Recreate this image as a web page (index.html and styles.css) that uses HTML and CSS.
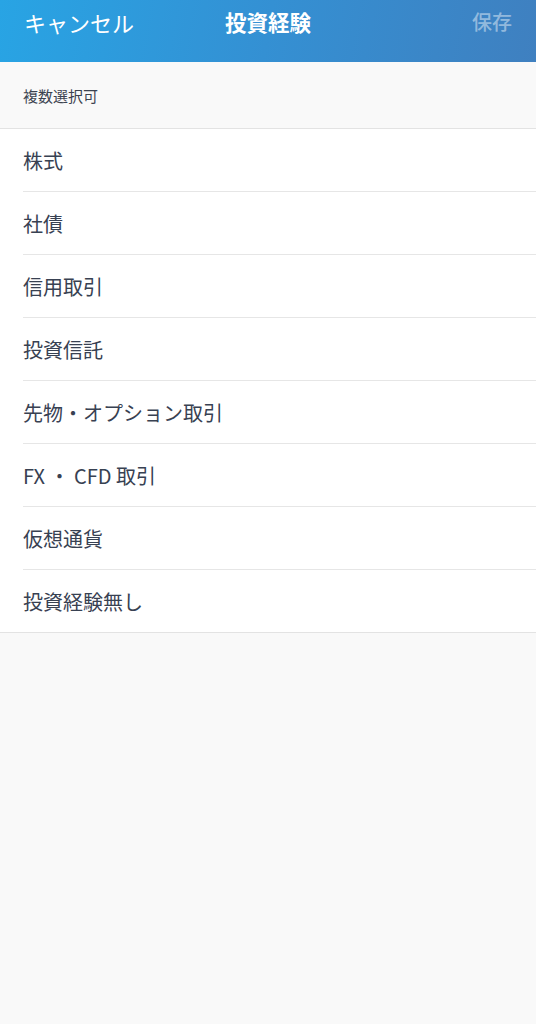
FILE: index.html
```html
<!DOCTYPE html>
<html lang="ja">
<head>
<meta charset="utf-8">
<title>投資経験</title>
<link rel="stylesheet" href="styles.css">
</head>
<body>
<header class="navbar">
  <span class="nav-left">キャンセル</span>
  <span class="nav-title">投資経験</span>
  <span class="nav-right">保存</span>
</header>
<div class="section-header">複数選択可</div>
<ul class="list">
  <li class="item">株式</li>
  <li class="item">社債</li>
  <li class="item">信用取引</li>
  <li class="item">投資信託</li>
  <li class="item">先物・オプション取引</li>
  <li class="item">FX ・ CFD 取引</li>
  <li class="item">仮想通貨</li>
  <li class="item last">投資経験無し</li>
</ul>
</body>
</html>
```
FILE: styles.css
```css
* { box-sizing: border-box; }
html, body {
  margin: 0;
  padding: 0;
  background: #f9f9f9;
  font-family: "Noto Sans CJK JP", "Noto Sans", sans-serif;
}
.navbar {
  height: 62px;
  background: linear-gradient(100deg, #28a4e4 0%, #3490d3 50%, #3f80c0 100%);
  display: grid;
  grid-template-columns: 1fr auto 1fr;
  align-items: start;
  padding: 5px 24px 0 24px;
  color: #fff;
}
.nav-left {
  font-size: 22px;
  line-height: 34px;
  justify-self: start;
}
.nav-title {
  font-size: 21.5px;
  font-weight: 700;
  line-height: 34px;
}
.nav-right {
  justify-self: end;
  font-size: 20px;
  line-height: 34px;
  font-weight: 500;
  color: rgba(255,255,255,0.45);
}
.section-header {
  height: 67px;
  padding: 0 23px;
  display: flex;
  align-items: center;
  font-size: 15px;
  color: #3c4350;
  border-bottom: 1px solid #e3e3e3;
  background: #f9f9f9;
}
.list {
  list-style: none;
  margin: 0;
  padding: 0 0 0 23px;
  background: #fff;
  border-bottom: 1px solid #e3e3e3;
}
.item {
  height: 63px;
  display: flex;
  align-items: center;
  font-size: 20px;
  color: #384152;
  border-bottom: 1px solid #e6e6e6;
}
.item.last {
  height: 62px;
  border-bottom: none;
}
```
